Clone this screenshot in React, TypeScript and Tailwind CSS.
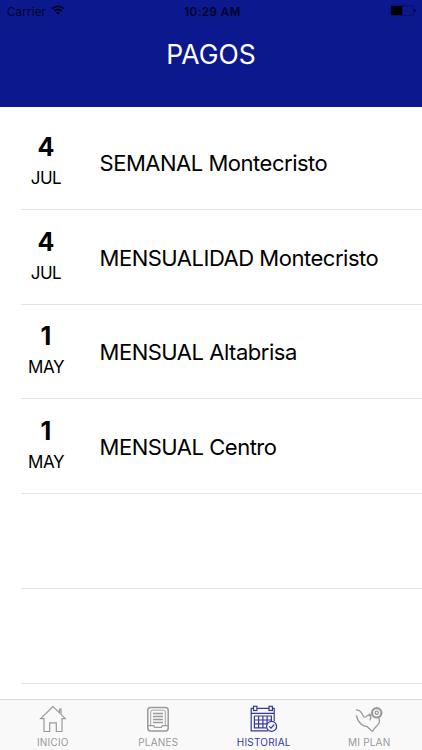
import React, { useState } from 'react';

interface Payment {
  day: string;
  month: string;
  title: string;
}

const payments: Payment[] = [
  { day: '4', month: 'JUL', title: 'SEMANAL Montecristo' },
  { day: '4', month: 'JUL', title: 'MENSUALIDAD Montecristo' },
  { day: '1', month: 'MAY', title: 'MENSUAL Altabrisa' },
  { day: '1', month: 'MAY', title: 'MENSUAL Centro' },
];

const iconProps = {
  viewBox: '0 0 28 28',
  fill: 'none',
  stroke: 'currentColor',
  className: 'w-7 h-7',
};

function HomeIcon() {
  return (
    <svg {...iconProps} strokeWidth="1.2">
      <path d="M14 1.500 1.700 13.600H5v12.900h5.700v-8.600h6.600v8.600H23V13.600h3.300L22 9.300V4h-1.500v3.900z" />
    </svg>
  );
}

function PlansIcon() {
  return (
    <svg {...iconProps} strokeWidth="1.5">
      <rect x="3.800" y="2.400" width="20.400" height="23.600" rx="2.800" />
      <path d="M3.800 20.600h5.900l.9 1.700h6.800l.9-1.700h5.900" strokeWidth="1.2" />
      <path d="M6.700 20V7q0-1.800 1.800-1.800h11Q21.300 5.200 21.300 7v13" strokeWidth="0.9" />
      <path d="M9 8.500h10M9 11.500h10M9 14.500h10M9 17.500h10" strokeWidth="1.3" />
    </svg>
  );
}

function HistoryIcon() {
  return (
    <svg {...iconProps} strokeWidth="1.2">
      <path d="M3.500 3.300H1.200v22.500h17M6.800 3.300h12.400M22.500 3.300h1.700v13M1.200 8.300h23" />
      <rect x="3.500" y="1.300" width="3.400" height="4.200" />
      <rect x="19" y="1.300" width="3.400" height="4.200" />
      <path d="M4.400 11h17v5.500M4.400 11v11.800h12M4.400 15h17M4.400 18.900h13M8.600 11v11.800M12.900 11v11.800M17.100 11v7.500" />
      <circle cx="21.600" cy="21.400" r="5" />
      <path d="m19.200 21.400 1.800 1.800 3.300-3.700" />
    </svg>
  );
}

function MyPlanIcon() {
  return (
    <svg {...iconProps} strokeWidth="1.3" strokeLinecap="round" strokeLinejoin="round">
      <path d="M1.300 4.800c2.600.2 4.300 1.400 5.400 3.300l1.700 3.100c.8 1.200 2 1.100 2.900.2 1-1.200 2.700-1.600 3.800-.5 1.100 1.200.8 2.700-.1 3.900" />
      <path d="M1.500 10.800c.5 3.200 2.200 6 4.800 8.400 1.700 1.500 3.700 2.200 6 2.500l4.200 4c.6.500 1.300.4 1.700-.3 1-3 5.700-4.800 6.200-8.500.1-1.300 0-2.500-.5-3.700" />
      <path d="m14.300 8.900 1.500 1.400" />
      <circle cx="21.700" cy="7.800" r="4.700" strokeWidth="2.200" />
      <circle cx="21.700" cy="7.800" r="1.600" strokeWidth="1.300" />
    </svg>
  );
}

const tabs = [
  { id: 'inicio', label: 'INICIO', icon: <HomeIcon /> },
  { id: 'planes', label: 'PLANES', icon: <PlansIcon /> },
  { id: 'historial', label: 'HISTORIAL', icon: <HistoryIcon /> },
  { id: 'miplan', label: 'MI PLAN', icon: <MyPlanIcon /> },
];

function StatusBar() {
  return (
    <div className="grid grid-cols-3 items-center h-[22px] pl-[7px] pr-[6px] text-[11.5px] text-[#030528]">
      <div className="flex items-center gap-[5px]">
        <span className="pt-px leading-[16px] tracking-[0.2px]">Carrier</span>
        <svg viewBox="0 0 14 10" className="w-[14px] h-[10px] -mt-[2px]" fill="none" stroke="currentColor" strokeWidth="1.8">
          <path d="M1 3.700c3.500-3.200 8.500-3.200 12 0" />
          <path d="M3.300 6.100c2.200-1.900 5.200-1.900 7.400 0" />
          <path d="M7 9.700 4.900 7.600c1.200-1 3-1 4.200 0z" fill="currentColor" stroke="none" />
        </svg>
      </div>
      <span className="pt-px leading-[16px] tracking-[0.5px] pl-[2px] text-center font-semibold whitespace-nowrap">
        10:29 AM
      </span>
      <svg viewBox="0 0 26 11" className="w-[26px] h-[11px] -mt-px justify-self-end">
        <rect x="1" y="0.700" width="22.300" height="9.600" rx="1" fill="none" stroke="#080c62" strokeWidth="0.800" />
        <rect x="1.300" y="1" width="11" height="9" fill="#000" />
        <path d="M24.300 3.800v3.400q1.400-.4 1.400-1.700t-1.400-1.700" fill="#030528" />
      </svg>
    </div>
  );
}

function PaymentRow({ day, month, title }: Payment) {
  return (
    <li className="flex h-[94.75px] border-b border-[#e4e4e6]">
      <div className="w-[50px] pt-[16.9px] text-center">
        <p className="text-[25px] leading-[30px] font-bold">{day}</p>
        <p className="mt-[5px] text-[17px] leading-[22px] tracking-[-0.5px]">{month}</p>
      </div>
      <p className="pl-[28.5px] pt-[32.900px] text-[22px] leading-[30px] tracking-[-0.48px] whitespace-nowrap">
        {title}
      </p>
    </li>
  );
}

export default function App() {
  const [activeTab, setActiveTab] = useState('historial');

  return (
    <div className="flex flex-col w-full h-screen overflow-hidden bg-white text-black font-['Inter',sans-serif]">
      <header className="h-[107px] shrink-0 bg-[#0c188e]">
        <StatusBar />
        <h1 className="pt-[14px] text-center text-[26.5px] leading-[36px] text-white">PAGOS</h1>
      </header>

      <main className="flex-1 min-h-0 overflow-hidden pt-[8px] pl-[21px]">
        <ul>
          {payments.map((payment, index) => (
            <PaymentRow key={index} {...payment} />
          ))}
          <li className="h-[94.75px] border-b border-[#e4e4e6]" />
          <li className="h-[94.75px] border-b border-[#e4e4e6]" />
        </ul>
      </main>

      <nav className="grid grid-cols-4 h-[51px] shrink-0 border-t border-[#d9d9da] bg-[#f9f9f9]">
        {tabs.map((tab) => (
          <button
            key={tab.id}
            onClick={() => setActiveTab(tab.id)}
            className={`flex flex-col items-center pt-[5px] ${
              activeTab === tab.id ? 'text-[#343a9c]' : 'text-[#9a9a9a]'
            }`}
          >
            {tab.icon}
            <span className="mt-[2px] text-[10px] leading-[14px] tracking-[0.2px]">{tab.label}</span>
          </button>
        ))}
      </nav>
    </div>
  );
}
